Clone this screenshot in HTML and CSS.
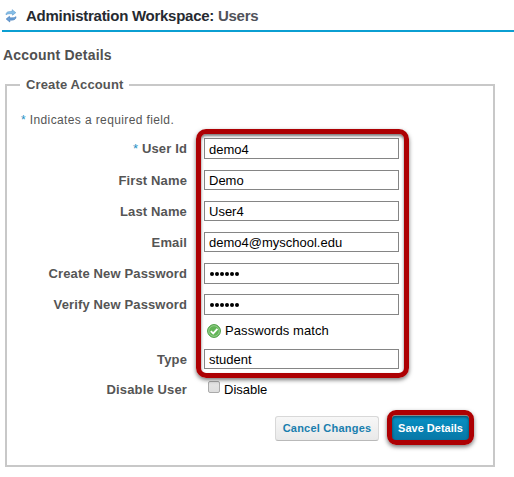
FILE: index.html
```
<!DOCTYPE html>
<html lang="en">
<head>
<meta charset="utf-8">
<title>Administration Workspace: Users</title>
<link rel="stylesheet" href="styles.css">
</head>
<body>
<header class="titlebar">
  <svg class="refresh" width="12" height="14" viewBox="0 0 12 14">
    <path d="M1 5.8C1 3 3 2.3 7.2 2.5V.7L10.8 3.7L7.5 6.2V4.8C4.5 4.6 2.5 4.7 1 5.8Z" fill="#86bfe8" stroke="#5b9bce" stroke-width=".6"/>
    <path d="M11 7.7C11 10.5 9 11.3 4.8 11.1V13L1.2 10L4.5 7.3V8.8C7.5 9 9.5 8.8 11 7.7Z" fill="#6b9fd6" stroke="#3975b5" stroke-width=".6"/>
  </svg>
  <h1><span class="workspace">Administration Workspace:</span> <span class="tool">Users</span></h1>
</header>
<main>
  <h2><span class="subtitle">Account Details</span></h2>
  <form>
    <fieldset>
      <legend><span class="legend-text">Create Account</span></legend>
      <p class="required"><span class="star">*</span> <span>Indicates a required field.</span></p>
      <div class="fields">
        <label class="l-id"><span class="star">*</span> User Id</label><div class="input tall">demo4</div>
        <label>First Name</label><div class="input">Demo</div>
        <label>Last Name</label><div class="input">User4</div>
        <label>Email</label><div class="input email">demo4@myschool.edu</div>
        <label>Create New Password</label><div class="input tall dots"><i></i><i></i><i></i><i></i><i></i><i></i></div>
        <label>Verify New Password</label><div class="input tall dots"><i></i><i></i><i></i><i></i><i></i><i></i></div>
        <div></div>
        <div class="match">
          <svg width="14" height="14" viewBox="0 0 14 14"><circle cx="7" cy="7" r="6.4" fill="#62b557" stroke="#4d9e45"/><circle cx="7" cy="7" r="5.3" fill="none" stroke="#a4d69c" stroke-width=".8"/><path d="M3.8 7.2L6.2 9.4L10.4 4.9" fill="none" stroke="#fff" stroke-width="1.8"/></svg>
          <span>Passwords match</span>
        </div>
        <label>Type</label><div class="input">student</div>
        <label>Disable User</label><div class="disable"><b class="check"></b><span>Disable</span></div>
        <div class="callout"></div>
      </div>
      <div class="actions">
        <div class="button cancel"><span>Cancel Changes</span></div>
        <div class="button save"><span>Save Details</span></div>
      </div>
    </fieldset>
  </form>
</main>
</body>
</html>
```
FILE: styles.css
```
* { box-sizing: border-box; }
body { margin: 0; width: 514px; height: 477px; overflow: hidden; background: #fff; color: #555; font: 13px "Liberation Sans", Arial, sans-serif; }
h1, h2, p { margin: 0; }
.titlebar { display: flex; height: 32px; margin-left: 2px; padding: 8px 0 0 3px; border-bottom: 2px solid #0b9fd2; }
.refresh { margin-top: 1px; }
h1 { margin-left: 9px; font-size: 15px; line-height: 16px; white-space: nowrap; letter-spacing: -.27px; }
.workspace { color: #262a31; }
.tool { color: #50525a; }
h2 { height: 44px; padding: 15px 0 0 3px; font-size: 14px; line-height: 17px; letter-spacing: .2px; color: #505050; }
fieldset { position: relative; width: 490px; height: 391px; margin: 0 0 0 5px; padding: 0 0 0 13px; border: 2px solid #c8c8c8; }
legend { height: 17px; margin: 0; padding: 0 6px; line-height: 17px; font-weight: bold; letter-spacing: .13px; }
.required { height: 40px; padding: 19px 0 0 1px; font-size: 12px; line-height: 16px; white-space: nowrap; letter-spacing: .38px; }
.star { color: #2590c4; }
.fields { position: relative; display: grid; grid-template-columns: 167px 195px; column-gap: 17px; grid-template-rows: 32px 31px 31px 31px 31px 31px 24px 30px 28px; }
.fields label { padding-top: 8px; line-height: 16px; text-align: right; font-weight: bold; letter-spacing: .14px; white-space: nowrap; }
.fields label .star { font-weight: normal; }
.input { display: flex; align-items: center; height: 20px; margin-top: 5px; padding: 2px 0 0 4px; border: 1px solid #858585; background: #fff; color: #000; line-height: 16px; }
.tall { height: 21px; }
.dots { padding: 1px 0 0 5px; }
.input i { width: 4px; height: 4px; margin-right: 1px; border-radius: 50%; background: #000; }
.match, .disable { display: flex; color: #000; line-height: 16px; }
.match { gap: 4px; padding: 3px 0 0 3px; letter-spacing: .08px; }
.match svg { margin-top: 1px; }
.disable { gap: 4px; padding: 8px 0 0 4px; }
.check { width: 12px; height: 12px; margin-top: -1px; border: 1px solid #aaa; border-radius: 2px; background: linear-gradient(#e5e5e5, #dedede); }
.callout { position: absolute; left: 176px; top: -4px; width: 213px; height: 249px; border: 5px solid #ad0003; border-radius: 10px; box-shadow: 0 2px 4px #0008, inset 0 2px 3px #0008; }
.actions { display: flex; gap: 13px; padding: 14px 0 0 255px; }
.button { display: flex; align-items: center; justify-content: center; height: 25px; padding-bottom: 1px; font-size: 11px; font-weight: bold; white-space: nowrap; }
.cancel { width: 104px; border: 1px solid #d8d8d8; border-bottom-color: #b9b9b9; border-radius: 3px; background: linear-gradient(#f7f7f7, #e9e9e9); color: #197eae; letter-spacing: .22px; }
.save { width: 77px; border-radius: 3px; background: linear-gradient(#0791c5, #0876a5); color: #fff; position: relative; }
.save::after { content: ""; position: absolute; inset: -6px -5px -4px; border: 5px solid #ad0003; border-radius: 9px; box-shadow: 0 2px 4px #0008, inset 0 2px 3px #0008; }
```
